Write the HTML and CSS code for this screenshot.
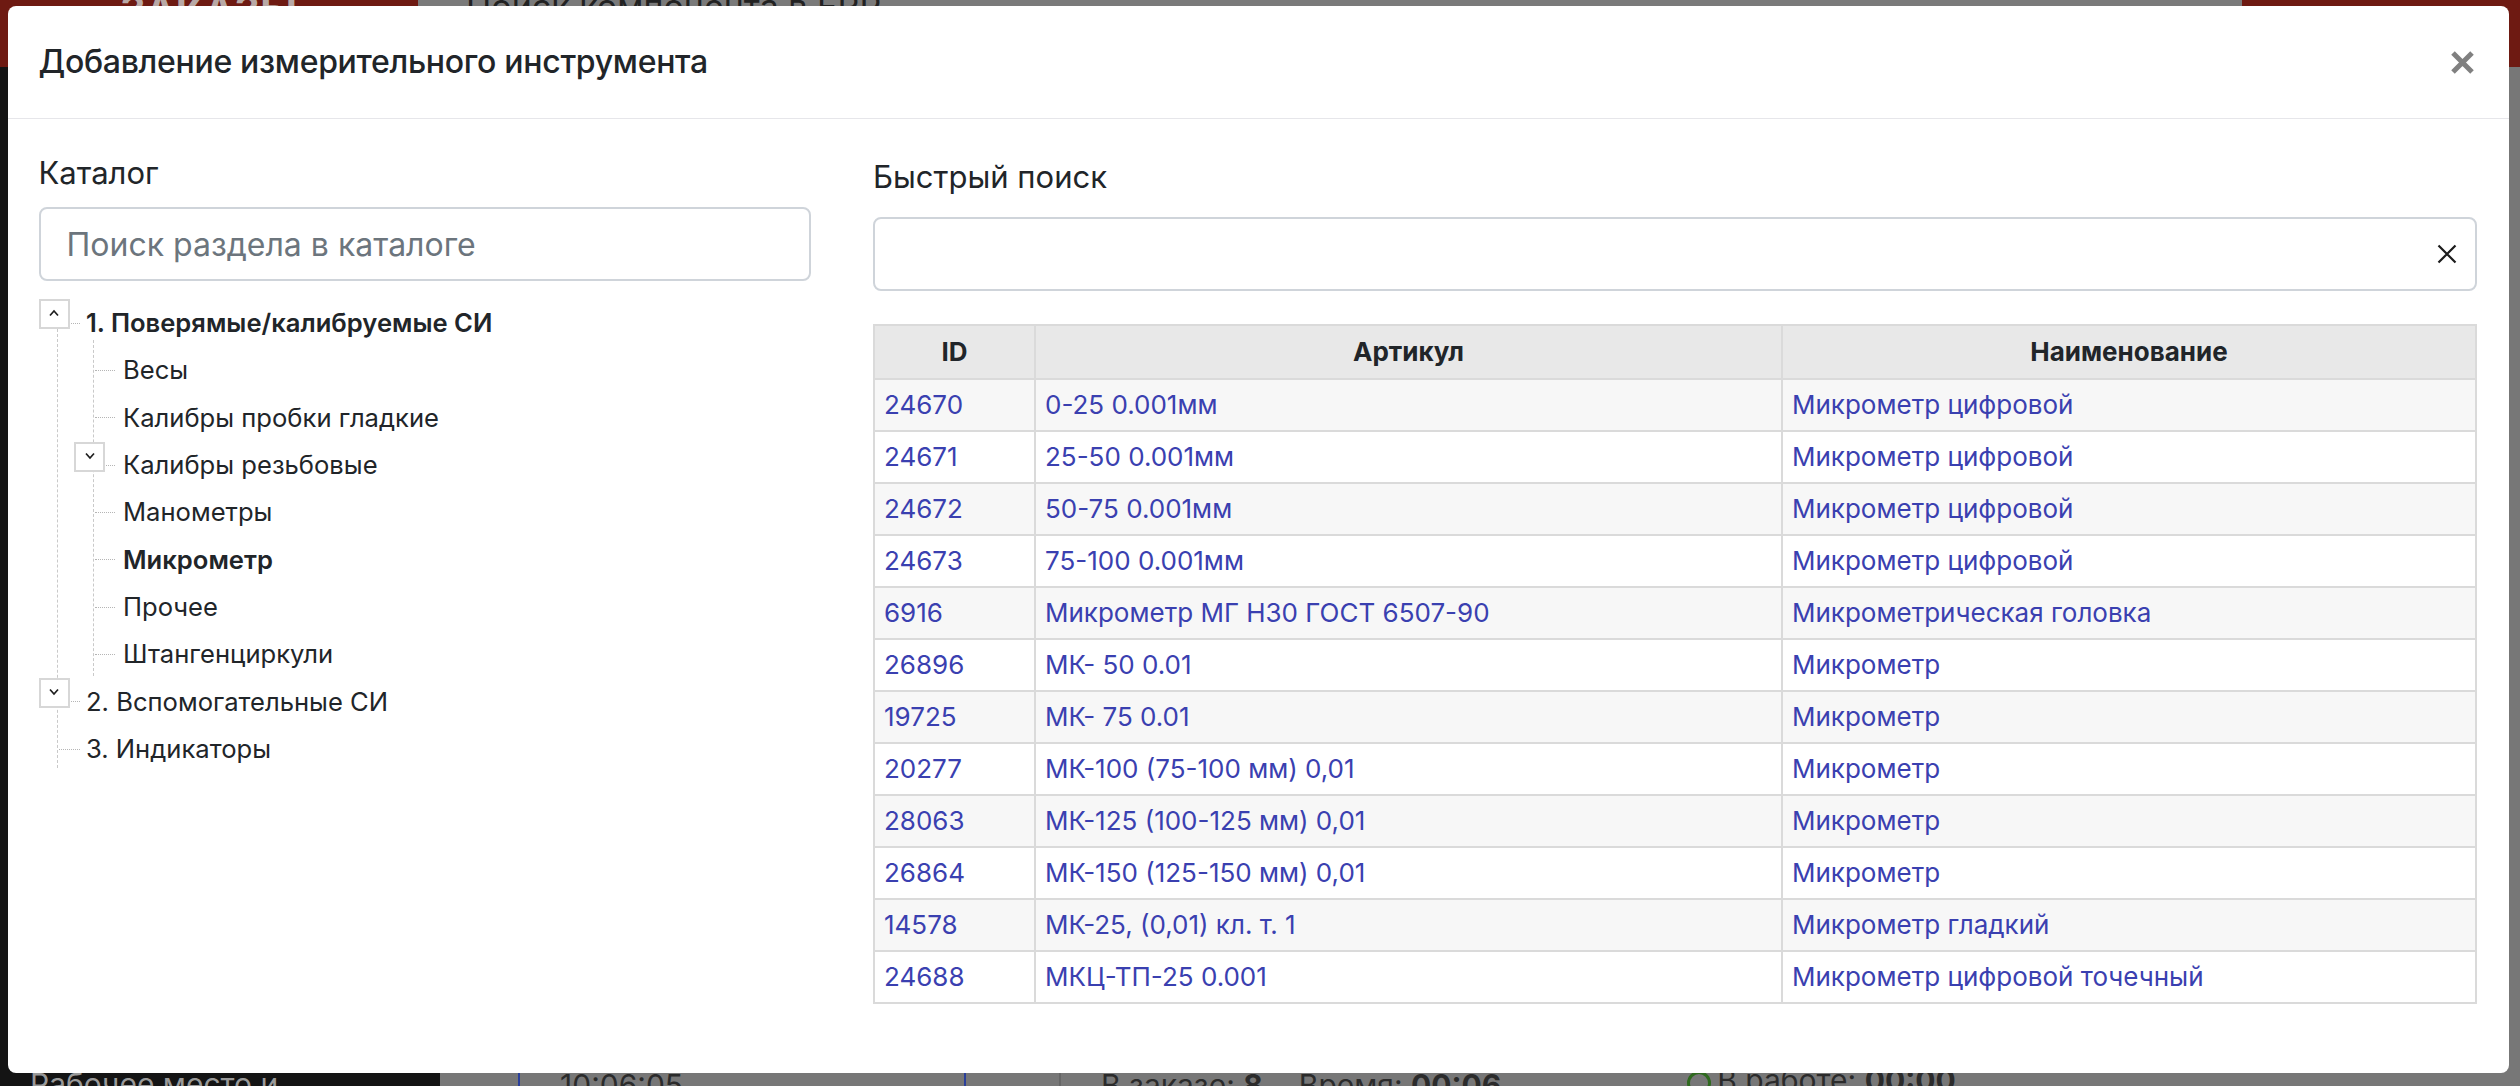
FILE: index.html
```html
<!DOCTYPE html>
<html lang="ru">
<head>
<meta charset="utf-8">
<title>Добавление измерительного инструмента</title>
<link rel="stylesheet" href="styles.css">
</head>
<body>
<div class="page">
  <header class="page-top">
    <div class="top-brand">ЗАКАЗЫ</div>
    <div class="top-search">Поиск компонента в ERP</div>
    <div class="top-right"></div>
  </header>
  <div class="page-main">
    <aside class="page-side"><span class="side-text">Рабочее место и</span></aside>
    <main class="page-content">
      <div class="content-col col-a"></div>
      <div class="content-col col-b"><span class="time">10:06:05</span></div>
      <div class="content-col col-c"></div>
      <div class="content-col col-d"><span class="order">В заказе: <b>8</b></span><span class="order">Время: <b>00:06</b></span><span class="order ok"><i class="ok-dot"></i>В работе: <b>00:00</b></span></div>
    </main>
  </div>
</div>

<div class="modal">
  <div class="modal-header">
    <h5 class="modal-title">Добавление измерительного инструмента</h5>
    <button class="close" type="button" aria-label="Закрыть">
      <svg width="25" height="25" viewBox="0 0 25 25"><path d="M3 3 L22 22 M22 3 L3 22" stroke="#808080" stroke-width="5" stroke-linecap="butt"/></svg>
    </button>
  </div>
  <div class="modal-body">
    <section class="catalog">
      <label class="field-label">Каталог</label>
      <input class="form-control" type="text" placeholder="Поиск раздела в каталоге">
      <ul class="tree level-0">
        <li>
          <div class="node bold has-toggle">
            <span class="toggle"><svg width="12" height="8" viewBox="0 0 12 8"><path d="M2 6.5 L6 2 L10 6.5" fill="none" stroke="#1e1e1e" stroke-width="1.7"/></svg></span>
            <span class="node-text">1. Поверямые/калибруемые СИ</span>
          </div>
          <ul class="tree level-1">
            <li><div class="node"><span class="node-text">Весы</span></div></li>
            <li><div class="node"><span class="node-text">Калибры пробки гладкие</span></div></li>
            <li><div class="node has-toggle">
              <span class="toggle"><svg width="12" height="8" viewBox="0 0 12 8"><path d="M2 1.5 L6 6 L10 1.5" fill="none" stroke="#1e1e1e" stroke-width="1.7"/></svg></span>
              <span class="node-text">Калибры резьбовые</span></div></li>
            <li><div class="node"><span class="node-text">Манометры</span></div></li>
            <li><div class="node bold"><span class="node-text">Микрометр</span></div></li>
            <li><div class="node"><span class="node-text">Прочее</span></div></li>
            <li><div class="node"><span class="node-text">Штангенциркули</span></div></li>
          </ul>
        </li>
        <li>
          <div class="node has-toggle">
            <span class="toggle"><svg width="12" height="8" viewBox="0 0 12 8"><path d="M2 1.5 L6 6 L10 1.5" fill="none" stroke="#1e1e1e" stroke-width="1.7"/></svg></span>
            <span class="node-text">2. Вспомогательные СИ</span>
          </div>
        </li>
        <li>
          <div class="node"><span class="node-text">3. Индикаторы</span></div>
        </li>
      </ul>
    </section>
    <section class="quick">
      <label class="field-label quick-label">Быстрый поиск</label>
      <div class="search-wrap">
        <input class="form-control search-input" type="text">
        <span class="clear-btn"><svg width="20" height="20" viewBox="0 0 20 20"><path d="M1.5 1.5 L18.5 18.5 M18.5 1.5 L1.5 18.5" stroke="#1c1c1c" stroke-width="2.2"/></svg></span>
      </div>
      <table class="grid">
        <colgroup><col class="c-id"><col class="c-art"><col></colgroup>
        <thead>
          <tr><th>ID</th><th>Артикул</th><th>Наименование</th></tr>
        </thead>
        <tbody>
          <tr><td><a>24670</a></td><td><a>0-25 0.001мм</a></td><td><a>Микрометр цифровой</a></td></tr>
          <tr><td><a>24671</a></td><td><a>25-50 0.001мм</a></td><td><a>Микрометр цифровой</a></td></tr>
          <tr><td><a>24672</a></td><td><a>50-75 0.001мм</a></td><td><a>Микрометр цифровой</a></td></tr>
          <tr><td><a>24673</a></td><td><a>75-100 0.001мм</a></td><td><a>Микрометр цифровой</a></td></tr>
          <tr><td><a>6916</a></td><td><a>Микрометр МГ Н30 ГОСТ 6507-90</a></td><td><a>Микрометрическая головка</a></td></tr>
          <tr><td><a>26896</a></td><td><a>МК- 50 0.01</a></td><td><a>Микрометр</a></td></tr>
          <tr><td><a>19725</a></td><td><a>МК- 75 0.01</a></td><td><a>Микрометр</a></td></tr>
          <tr><td><a>20277</a></td><td><a>МК-100 (75-100 мм) 0,01</a></td><td><a>Микрометр</a></td></tr>
          <tr><td><a>28063</a></td><td><a>МК-125 (100-125 мм) 0,01</a></td><td><a>Микрометр</a></td></tr>
          <tr><td><a>26864</a></td><td><a>МК-150 (125-150 мм) 0,01</a></td><td><a>Микрометр</a></td></tr>
          <tr><td><a>14578</a></td><td><a>МК-25, (0,01) кл. т. 1</a></td><td><a>Микрометр гладкий</a></td></tr>
          <tr><td><a>24688</a></td><td><a>МКЦ-ТП-25 0.001</a></td><td><a>Микрометр цифровой точечный</a></td></tr>
        </tbody>
      </table>
    </section>
  </div>
</div>
</body>
</html>
```

FILE: styles.css
```css
* { box-sizing: border-box; }
html, body {
  margin: 0;
  width: 2520px;
  height: 1086px;
  overflow: hidden;
}
body {
  font-family: Inter, "Liberation Sans", sans-serif;
  color: #212529;
  background: #777777;
  position: relative;
}

/* dimmed page behind the modal */
.page {
  display: flex;
  flex-direction: column;
  height: 1086px;
}
.page-top {
  height: 67px;
  display: flex;
  background: #6e1a12;
}
.top-brand {
  width: 418px;
  color: #b9a9a6;
  font-size: 40px;
  font-weight: 700;
  padding-left: 120px;
  line-height: 20px;
}
.top-search {
  flex: 1;
  background: #7a7a7a;
  border-bottom: 2px solid #5a5a5a;
  color: #222;
  font-size: 34px;
  padding-left: 48px;
  line-height: 14px;
}
.top-right {
  width: 278px;
  background: #6e1a12;
}
.page-main {
  flex: 1;
  display: flex;
}
.page-side {
  width: 440px;
  background: #141414;
  display: flex;
  align-items: flex-end;
  padding-left: 30px;
}
.side-text {
  color: #9a9a9a;
  font-size: 30px;
  line-height: 20px;
  margin-bottom: -8px;
}
.page-content {
  flex: 1;
  display: flex;
  background: #777777;
}
.content-col { height: 100%; }
.col-a { width: 78px; }
.col-b { width: 448px; border-left: 2px solid #2a3f9a; border-right: 2px solid #2a3f9a; display: flex; align-items: flex-end; padding-left: 40px; }
.col-c { width: 95px; border-right: 2px solid #666; }
.col-d { flex: 1; display: flex; align-items: flex-end; gap: 36px; padding-left: 40px; }
.time, .order {
  color: #2b2b2b;
  font-size: 30px;
  line-height: 20px;
  margin-bottom: -9px;
}
.order.ok { margin-left: 150px; }
.ok-dot {
  display: inline-block;
  width: 24px;
  height: 24px;
  border: 3px solid #2f6a1f;
  border-radius: 50%;
  margin-right: 6px;
  vertical-align: middle;
}

/* modal */
.modal {
  position: absolute;
  left: 8px;
  top: 6px;
  width: 2501px;
  height: 1067px;
  background: #ffffff;
  border-radius: 8px;
  display: flex;
  flex-direction: column;
}
.modal-header {
  height: 113px;
  border-bottom: 1px solid #e6e6ea;
  display: flex;
  align-items: center;
  justify-content: space-between;
  padding: 0 34px 0 30.5px;
}
.modal-title {
  margin: 0;
  font-size: 32px;
  font-weight: 500;
  line-height: 48px;
  letter-spacing: -0.3px;
}
.close {
  border: 0;
  background: transparent;
  padding: 0;
  width: 25px;
  height: 25px;
  display: flex;
}

.modal-body {
  flex: 1;
  display: grid;
  grid-template-columns: 772px 1fr;
  column-gap: 62.5px;
  padding: 31px 32px 0 30.5px;
  align-items: start;
}

.field-label {
  display: block;
  font-size: 31px;
  line-height: 46px;
  margin-bottom: 11px;
}
.quick { padding-top: 4px; }
.quick-label { margin-bottom: 17px; }

.form-control {
  display: block;
  width: 100%;
  height: 74px;
  border: 2px solid #cfd4da;
  border-radius: 8px;
  padding: 0 26px;
  font-family: inherit;
  font-size: 32px;
  color: #212529;
  background: #fff;
  outline: none;
}
.form-control::placeholder { color: #6c757d; opacity: 1; }

.search-wrap { position: relative; }
.clear-btn {
  position: absolute;
  right: 20px;
  top: 27px;
  width: 20px;
  height: 20px;
  display: flex;
}

/* tree */
.tree {
  list-style: none;
  margin: 0;
  padding: 0;
  position: relative;
  font-size: 25.6px;
}
.tree.level-0 { margin-top: 18px; }
.tree.level-0::before {
  content: "";
  position: absolute;
  left: 18.5px;
  top: 30px;
  bottom: 4px;
  border-left: 1px dashed #c9c9c9;
}
.tree.level-1::before {
  content: "";
  position: absolute;
  left: 54.5px;
  top: -6px;
  bottom: 2px;
  border-left: 1px dashed #c9c9c9;
}
.node {
  position: relative;
  height: 47.33px;
  display: flex;
  align-items: center;
  padding-left: 47.5px;
  white-space: nowrap;
}
.level-1 .node { padding-left: 84.5px; }
.node::before {
  content: "";
  position: absolute;
  left: 20.5px;
  width: 21px;
  top: 50%;
  border-top: 1px dotted #b5b5b5;
}
.level-1 .node::before { left: 56.5px; width: 20px; }
.node.bold .node-text { font-weight: 600; }
.toggle {
  position: absolute;
  left: 0;
  top: 0;
  width: 31px;
  height: 30px;
  border: 2px solid #d7d7d7;
  background: #fff;
  display: flex;
  justify-content: center;
  padding-top: 8px;
  z-index: 1;
}
.level-1 .toggle { left: 35.5px; top: 1.5px; }

/* table */
.grid {
  width: 100%;
  border-collapse: collapse;
  margin-top: 33px;
  font-size: 26px;
  line-height: 38px;
  table-layout: fixed;
}
.c-id { width: 161px; }
.c-art { width: 747px; }
.grid th, .grid td {
  border: 2px solid #dadada;
  padding: 6px 9px;
  text-align: left;
  white-space: nowrap;
}
.grid th {
  background: #e8e8e8;
  font-weight: 700;
  text-align: center;
  padding: 7px 9px;
}
.grid tbody tr:nth-child(odd) td { background: #f7f7f7; }
.grid a { color: #3a40b0; text-decoration: none; }
```
